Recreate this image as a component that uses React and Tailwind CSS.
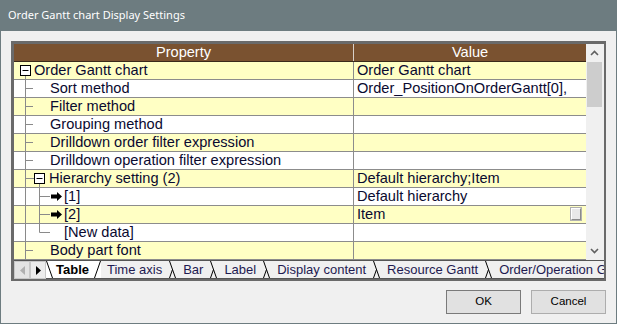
import React from 'react'

const rows = [
  { label: 'Order Gantt chart', value: 'Order Gantt chart', kind: 'root' },
  { label: 'Sort method', value: 'Order_PositionOnOrderGantt[0],', kind: 'child' },
  { label: 'Filter method', value: '', kind: 'child' },
  { label: 'Grouping method', value: '', kind: 'child' },
  { label: 'Drilldown order filter expression', value: '', kind: 'child' },
  { label: 'Drilldown operation filter expression', value: '', kind: 'child' },
  { label: 'Hierarchy setting (2)', value: 'Default hierarchy;Item', kind: 'group' },
  { label: '[1]', value: 'Default hierarchy', kind: 'item' },
  { label: '[2]', value: 'Item', kind: 'item', button: true },
  { label: '[New data]', value: '', kind: 'new' },
  { label: 'Body part font', value: '', kind: 'child' }
]

const tabs = ['Table', 'Time axis', 'Bar', 'Label', 'Display content', 'Resource Gantt', 'Order/Operation Gantt']

const LINE = '#8a8a8a'

// tree connectors for a row, drawn over the left part of the property cell
const TreeLines = ({ kind }) => (
  <svg className="absolute left-0 top-0" width="52" height="18">
    {kind === 'root' && (
      <>
        <rect x="6.5" y="3.5" width="10" height="10" fill="#fff" stroke="#000" />
        <line x1="8.5" y1="8.5" x2="14.5" y2="8.5" stroke="#000" />
        <line x1="11.5" y1="14" x2="11.5" y2="18" stroke={LINE} />
      </>
    )}
    {kind === 'child' && (
      <>
        <line x1="11.5" y1="0" x2="11.5" y2="18" stroke={LINE} />
        <line x1="11.5" y1="8.5" x2="19" y2="8.5" stroke={LINE} />
      </>
    )}
    {kind === 'group' && (
      <>
        <line x1="11.5" y1="0" x2="11.5" y2="18" stroke={LINE} />
        <line x1="11.5" y1="8.5" x2="20" y2="8.5" stroke={LINE} />
        <rect x="20.5" y="3.5" width="10" height="10" fill="#fff" stroke="#000" />
        <line x1="22.5" y1="8.5" x2="28.5" y2="8.5" stroke="#000" />
        <line x1="25.5" y1="14" x2="25.5" y2="18" stroke={LINE} />
      </>
    )}
    {kind === 'item' && (
      <>
        <line x1="11.5" y1="0" x2="11.5" y2="18" stroke={LINE} />
        <line x1="25.5" y1="0" x2="25.5" y2="18" stroke={LINE} />
        <line x1="25.5" y1="8.5" x2="36" y2="8.5" stroke={LINE} />
        <polygon points="37,6.5 43,6.5 43,4 48,8.5 43,13 43,10.5 37,10.5" fill="#000" />
      </>
    )}
    {kind === 'new' && (
      <>
        <line x1="11.5" y1="0" x2="11.5" y2="18" stroke={LINE} />
        <line x1="25.5" y1="0" x2="25.5" y2="8.5" stroke={LINE} />
        <line x1="25.5" y1="8.5" x2="36" y2="8.5" stroke={LINE} />
      </>
    )}
  </svg>
)

const indent = {
  root: 'pl-[20px]',
  child: 'pl-[36px]',
  group: 'pl-[35px]',
  item: 'pl-[50px]',
  new: 'pl-[50px]'
}

const TabEdge = ({ first }) => (
  <svg width="9" height="18" className="shrink-0">
    {first ? (
      <line x1="0.5" y1="0" x2="6.5" y2="17" stroke="#000" />
    ) : (
      <>
        <line x1="1.5" y1="17" x2="4.5" y2="8.5" stroke="#000" />
        <line x1="1.5" y1="0" x2="7.5" y2="17" stroke="#000" />
      </>
    )}
  </svg>
)

const App = () => {
  return (
    <div className="w-[617px] h-[324px] bg-[#f0f0f0] border border-t-0 border-[#6d7c80] flex flex-col overflow-hidden font-['Liberation_Sans',Arial,sans-serif]">
      {/* Title bar */}
      <div className="h-[31px] shrink-0 bg-[#6d7c80] text-white flex items-center pl-[7px] text-[11px] font-['Noto_Sans',sans-serif]">
        Order Gantt chart Display Settings
      </div>

      {/* Property grid */}
      <div className="pt-[10px] px-[10px]">
        <div className="border-l-[3px] border-t-[3px] border-r-2 border-b-2 border-[#6a6a6a] bg-[#f0f0f0]">
          <div className="flex">
            <div className="w-[572px] text-[14.6px] leading-[17px]">
              <div className="flex h-[18px] bg-[#7a5230] text-white border-b border-[#3a2a1a]">
                <div className="w-[340px] text-center border-r border-[#d8d0c8]">Property</div>
                <div className="flex-1 text-center">Value</div>
              </div>
              {rows.map((row, i) => (
                <div
                  key={i}
                  className={`flex h-[18px] border-b border-[#8c8c8c] ${i % 2 === 0 ? 'bg-[#ffffc4]' : 'bg-white'}`}
                >
                  <div className={`relative w-[340px] border-r border-[#8c8c8c] whitespace-nowrap text-[#0a0a30] ${indent[row.kind]}`}>
                    <TreeLines kind={row.kind} />
                    {row.label}
                  </div>
                  <div className="flex-1 flex items-start pl-[3px] whitespace-nowrap overflow-hidden text-[#0a0a30]">
                    <span className="flex-1">{row.value}</span>
                    {row.button && (
                      <span className="mt-[2px] mr-[5px] w-[10px] h-[12px] bg-[#e8e8e8] border border-[#ffffff] border-r-[#8a8a8a] border-b-[#8a8a8a] outline outline-1 outline-[#b0b0b0]" />
                    )}
                  </div>
                </div>
              ))}
            </div>

            {/* Scrollbar */}
            <div className="w-[17px] h-[216px] bg-[#f0f0f0] flex flex-col">
              <div className="h-[18px] flex items-center justify-center">
                <svg width="9" height="6"><polyline points="1,5 4.5,1.5 8,5" fill="none" stroke="#606060" strokeWidth="1.6" /></svg>
              </div>
              <div className="mx-[1px] h-[45px] bg-[#cdcdcd]" />
              <div className="flex-1" />
              <div className="h-[18px] flex items-center justify-center">
                <svg width="9" height="6"><polyline points="1,1 4.5,4.5 8,1" fill="none" stroke="#606060" strokeWidth="1.6" /></svg>
              </div>
            </div>
          </div>

          {/* Sheet tabs */}
          <div className="flex h-[19px] border-t border-[#555] text-[13px] leading-[18px] overflow-hidden whitespace-nowrap">
            <div className="w-[16px] h-[18px] shrink-0 flex items-center justify-center border border-[#c8c8c8] bg-[#e4e4e4]">
              <svg width="5" height="9"><polygon points="5,0 0,4.5 5,9" fill="#b0b0b0" /></svg>
            </div>
            <div className="w-[16px] h-[18px] shrink-0 flex items-center justify-center border border-[#c8c8c8] bg-[#ececec]">
              <svg width="5" height="9"><polygon points="0,0 5,4.5 0,9" fill="#000" /></svg>
            </div>
            <div className="flex h-[18px] border-b border-[#555] flex-1 overflow-hidden">
              {tabs.map((t, i) => (
                <React.Fragment key={t}>
                  {i > 1 && <TabEdge first={false} />}
                  {i === 0 ? (
                    <span className="flex shrink-0 bg-white font-bold text-black">
                      <TabEdge first />
                      <span className="pl-[1px] pr-[3px]">{t}</span>
                      <svg width="9" height="18" className="shrink-0">
                        <line x1="2.5" y1="17" x2="8.5" y2="0" stroke="#000" />
                      </svg>
                    </span>
                  ) : (
                    <span className="shrink-0 px-[6px] text-[#1e1a50]">{t}</span>
                  )}
                </React.Fragment>
              ))}
            </div>
          </div>
        </div>
      </div>

      {/* Buttons */}
      <div className="flex justify-end gap-[10px] pr-[10px] pt-[9px] text-[11.5px] font-['Liberation_Sans',Arial,sans-serif]">
        <button className="w-[75px] h-[24px] bg-[#e1e1e1] border border-[#7a7a7a] text-black">OK</button>
        <button className="w-[75px] h-[24px] bg-[#e1e1e1] border border-[#adadad] text-black">Cancel</button>
      </div>
    </div>
  )
}

export default App
